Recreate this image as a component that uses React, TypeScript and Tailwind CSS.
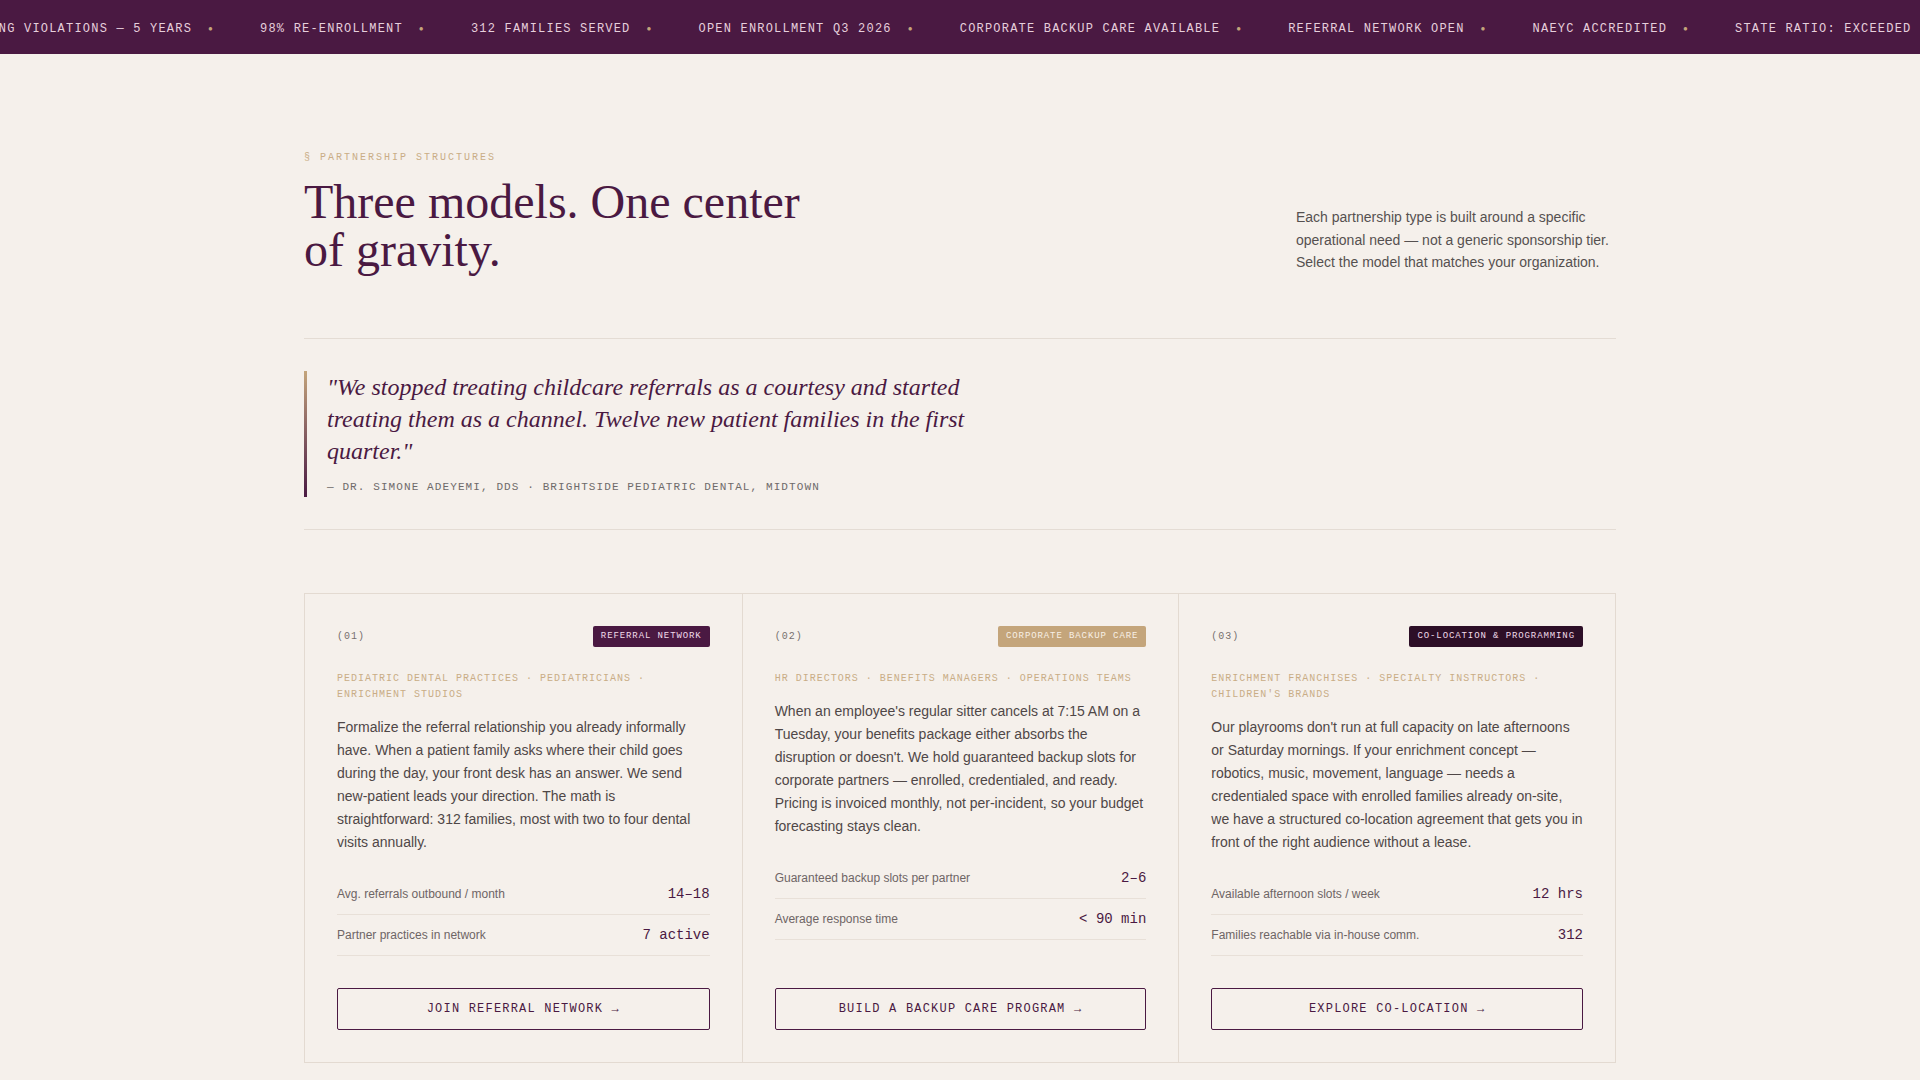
import React from 'react';

const tickerItems = [
  'ZERO LICENSING VIOLATIONS — 5 YEARS',
  '98% RE-ENROLLMENT',
  '312 FAMILIES SERVED',
  'OPEN ENROLLMENT Q3 2026',
  'CORPORATE BACKUP CARE AVAILABLE',
  'REFERRAL NETWORK OPEN',
  'NAEYC ACCREDITED',
  'STATE RATIO: EXCEEDED',
  'ZERO LICENSING VIOLATIONS — 5 YEARS',
  '98% RE-ENROLLMENT',
];

interface Model {
  num: string;
  tag: string;
  tagClass: string;
  audience: string;
  body: string;
  metrics: [string, string][];
  cta: string;
}

const models: Model[] = [
  {
    num: '(01)',
    tag: 'REFERRAL NETWORK',
    tagClass: 'bg-[#4a1942] text-[#f1dcea]',
    audience: 'PEDIATRIC DENTAL PRACTICES · PEDIATRICIANS · ENRICHMENT STUDIOS',
    body: 'Formalize the referral relationship you already informally have. When a patient family asks where their child goes during the day, your front desk has an answer. We send new-patient leads your direction. The math is straightforward: 312 families, most with two to four dental visits annually.',
    metrics: [
      ['Avg. referrals outbound / month', '14–18'],
      ['Partner practices in network', '7 active'],
    ],
    cta: 'JOIN REFERRAL NETWORK →',
  },
  {
    num: '(02)',
    tag: 'CORPORATE BACKUP CARE',
    tagClass: 'bg-[#c4a57b] text-[#f8f0e6]',
    audience: 'HR DIRECTORS · BENEFITS MANAGERS · OPERATIONS TEAMS',
    body: "When an employee's regular sitter cancels at 7:15 AM on a Tuesday, your benefits package either absorbs the disruption or doesn't. We hold guaranteed backup slots for corporate partners — enrolled, credentialed, and ready. Pricing is invoiced monthly, not per-incident, so your budget forecasting stays clean.",
    metrics: [
      ['Guaranteed backup slots per partner', '2–6'],
      ['Average response time', '< 90 min'],
    ],
    cta: 'BUILD A BACKUP CARE PROGRAM →',
  },
  {
    num: '(03)',
    tag: 'CO-LOCATION & PROGRAMMING',
    tagClass: 'bg-[#2d0f27] text-[#f1dcea]',
    audience: "ENRICHMENT FRANCHISES · SPECIALTY INSTRUCTORS · CHILDREN'S BRANDS",
    body: "Our playrooms don't run at full capacity on late afternoons or Saturday mornings. If your enrichment concept — robotics, music, movement, language — needs a credentialed space with enrolled families already on-site, we have a structured co-location agreement that gets you in front of the right audience without a lease.",
    metrics: [
      ['Available afternoon slots / week', '12 hrs'],
      ['Families reachable via in-house comm.', '312'],
    ],
    cta: 'EXPLORE CO-LOCATION →',
  },
];

const Ticker: React.FC = () => (
  <div className="h-[54px] bg-[#4a1942] overflow-hidden flex items-center">
    <div className="mt-[4px] flex items-center gap-[45px] whitespace-nowrap -translate-x-[102px] font-['Liberation_Mono',monospace] text-[12px] tracking-[0.1em] text-[#e6cfdc]">
      {tickerItems.map((item, i) => (
        <div key={i} className="flex items-center gap-[15px]">
          <span>{item}</span>
          <span className="w-[8px] text-center text-[8px] text-[#c4a57b]">●</span>
        </div>
      ))}
    </div>
  </div>
);

const ModelCard: React.FC<{ model: Model; first: boolean }> = ({ model, first }) => (
  <div className={`flex flex-col p-8 ${first ? '' : 'border-l border-[#e3dad1]'}`}>
    <div className="flex items-center justify-between">
      <span className="font-['Liberation_Mono',monospace] text-[10px] tracking-[0.1em] text-[#77706f]">
        {model.num}
      </span>
      <span
        className={`font-['Liberation_Mono',monospace] text-[9px] leading-[13px] tracking-[0.1em] px-2 py-1 rounded-[2px] ${model.tagClass}`}
      >
        {model.tag}
      </span>
    </div>
    <p className="mt-6 font-['Liberation_Mono',monospace] text-[10px] leading-[16px] tracking-[0.1em] text-[#c9ad86]">
      {model.audience}
    </p>
    <p className="mt-[13px] font-['Liberation_Sans',Arial,sans-serif] text-[14px] leading-[23px] text-[#4f4747]">
      {model.body}
    </p>
    <div className="mt-5">
      {model.metrics.map(([label, value]) => (
        <div key={label} className="flex items-center justify-between py-[10px] border-b border-[#e8e0d8]">
          <span className="font-['Liberation_Sans',Arial,sans-serif] text-[12px] leading-[20px] text-[#6e6565]">
            {label}
          </span>
          <span className="font-['Liberation_Mono',monospace] text-[14px] leading-[20px] text-[#4a1942]">
            {value}
          </span>
        </div>
      ))}
    </div>
    <div className="mt-auto pt-8">
      <button className="h-[42px] w-full border border-[#4a1942] rounded-[2px] font-['Liberation_Mono',monospace] text-[12px] tracking-[0.1em] text-[#4a1942] hover:bg-[#4a1942] hover:text-[#f5f0eb] transition-colors">
        {model.cta}
      </button>
    </div>
  </div>
);

export default function App() {
  return (
    <div className="min-h-screen bg-[#f5f0eb]">
      <Ticker />

      <section className="max-w-[1440px] mx-auto px-16 pt-24 pb-16">
        {/* heading row */}
        <div className="flex items-end justify-between">
          <div>
            <p className="font-['Liberation_Mono',monospace] text-[10px] leading-[16px] tracking-[0.2em] text-[#c9ad86]">
              § PARTNERSHIP STRUCTURES
            </p>
            <h2 className="mt-3 max-w-[520px] font-['Liberation_Serif','Times_New_Roman',serif] text-[48px] leading-[48px] text-[#4a1942]">
              Three models. One center of gravity.
            </h2>
          </div>
          <p className="max-w-[320px] font-['Liberation_Sans',Arial,sans-serif] text-[14px] leading-[22.6px] text-[#555050]">
            Each partnership type is built around a specific operational need — not a generic sponsorship tier. Select the model that matches your organization.
          </p>
        </div>

        {/* testimonial */}
        <div className="mt-16 border-t border-b border-[#e4dcd4] py-8">
          <div className="flex">
            <div className="w-[3px] shrink-0 bg-gradient-to-b from-[#c4a57b] to-[#4a1942]" />
            <div className="pl-5">
              <p className="max-w-[680px] font-['Liberation_Serif','Times_New_Roman',serif] italic text-[24px] leading-[32px] text-[#4a1942]">
                "We stopped treating childcare referrals as a courtesy and started treating them as a channel. Twelve new patient families in the first quarter."
              </p>
              <p className="mt-3 mb-[2px] font-['Liberation_Mono',monospace] text-[11px] leading-[16px] tracking-[0.1em] text-[#6e6a6a]">
                — DR. SIMONE ADEYEMI, DDS · BRIGHTSIDE PEDIATRIC DENTAL, MIDTOWN
              </p>
            </div>
          </div>
        </div>

        {/* partnership models */}
        <div className="mt-[63px] grid grid-cols-3 border border-[#e3dad1]">
          {models.map((m, i) => (
            <ModelCard key={m.num} model={m} first={i === 0} />
          ))}
        </div>
      </section>
    </div>
  );
}
